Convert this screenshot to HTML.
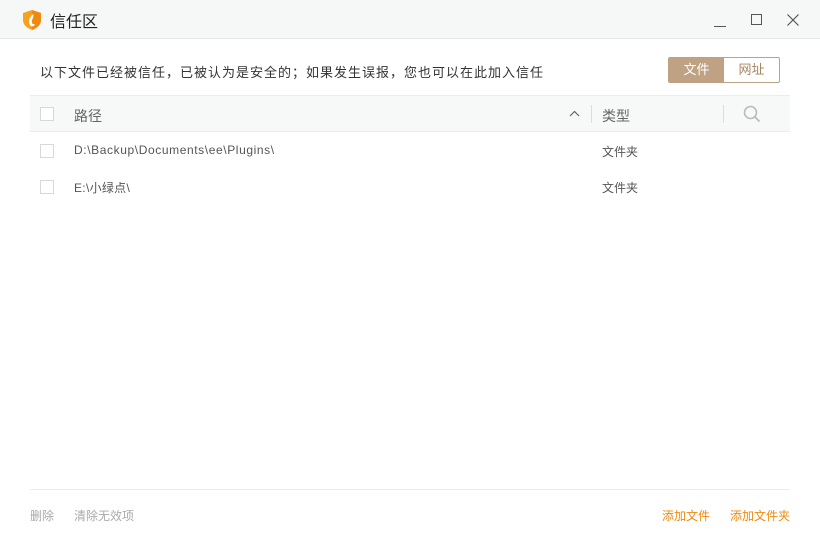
<!DOCTYPE html>
<html><head><meta charset="utf-8"><style>
*{margin:0;padding:0;box-sizing:border-box}
body{width:820px;height:540px;background:#fff;font-family:"Liberation Sans","Noto Sans CJK SC",sans-serif;position:relative;overflow:hidden;color:#333}
.t{position:absolute;white-space:nowrap}
.cb{position:absolute;width:14px;height:14px;border:1px solid #d8d8d8;background:#fff}
</style></head><body>
<div style="position:absolute;left:0;top:0;width:820px;height:39px;background:#f6f7f7;border-bottom:1px solid #e8e8e8"></div>
<svg style="position:absolute;left:22px;top:9px" width="20" height="22" viewBox="0 0 20 22"><path d="M10 1 L19 4 V11 C19 16 15 19 10 21 C5 19 1 16 1 11 V4 Z" fill="#f7a21b"/><path d="M10 1 L19 4 V11 C19 16 15 19 10 21 Z" fill="#f08a0f"/><path d="M11 5 C7 9 6 12 8 16 C9 18 12 18 13 15 C11 16 9 14 10 11 C11 9 12 7 11 5 Z" fill="#fff"/></svg>
<div class="t" style="left:50px;top:8px;font-size:16px;color:#222">信任区</div>
<div style="position:absolute;left:714px;top:26px;width:12px;height:1px;background:#555"></div>
<div style="position:absolute;left:751px;top:14px;width:11px;height:11px;border:1px solid #555"></div>
<svg style="position:absolute;left:787px;top:14px" width="12" height="12"><path d="M0.5 0.5L11.5 11.5M11.5 0.5L0.5 11.5" stroke="#555" stroke-width="1.2"/></svg>
<div class="t" style="left:40px;top:62px;font-size:13px;letter-spacing:1px;color:#333">以下文件已经被信任，已被认为是安全的；如果发生误报，您也可以在此加入信任</div>
<div style="position:absolute;left:668px;top:57px;width:112px;height:26px;border:1px solid #bfa283;border-radius:2px;overflow:hidden">
<div style="position:absolute;left:0;top:0;width:55px;height:24px;background:#bfa283;color:#fff;font-size:13px;text-align:center;line-height:24px">文件</div>
<div style="position:absolute;left:55px;top:0;width:55px;height:24px;color:#a88562;font-size:13px;text-align:center;line-height:24px">网址</div></div>
<div style="position:absolute;left:30px;top:95px;width:760px;height:37px;background:#f7f8f8;border-top:1px solid #ececec;border-bottom:1px solid #ececec"></div>
<div class="cb" style="left:40px;top:107px"></div>
<div class="t" style="left:74px;top:106px;font-size:14px;color:#666">路径</div>
<svg style="position:absolute;left:569px;top:110px" width="11" height="7"><path d="M1 6L5.5 1.5L10 6" stroke="#666" fill="none" stroke-width="1.2"/></svg>
<div style="position:absolute;left:591px;top:105px;width:1px;height:18px;background:#ddd"></div>
<div class="t" style="left:602px;top:106px;font-size:14px;color:#666">类型</div>
<div style="position:absolute;left:723px;top:105px;width:1px;height:18px;background:#ddd"></div>
<svg style="position:absolute;left:743px;top:105px" width="18" height="18"><circle cx="7.5" cy="7.5" r="6" stroke="#bbb" stroke-width="1.6" fill="none"/><path d="M12 12L16.5 16.5" stroke="#bbb" stroke-width="1.8"/></svg>
<div class="cb" style="left:40px;top:144px"></div>
<div class="t" style="left:74px;top:143px;font-size:12px;letter-spacing:0.6px;color:#555">D:\Backup\Documents\ee\Plugins\</div>
<div class="t" style="left:602px;top:143px;font-size:12px;color:#555">文件夹</div>
<div class="cb" style="left:40px;top:180px"></div>
<div class="t" style="left:74px;top:179px;font-size:12px;letter-spacing:0.3px;color:#555">E:\小绿点\</div>
<div class="t" style="left:602px;top:179px;font-size:12px;color:#555">文件夹</div>
<div style="position:absolute;left:30px;top:489px;width:760px;height:1px;background:#ececec"></div>
<div class="t" style="left:30px;top:507px;font-size:12px;color:#aaa">删除</div>
<div class="t" style="left:74px;top:507px;font-size:12px;color:#aaa">清除无效项</div>
<div class="t" style="left:662px;top:507px;font-size:12px;color:#f08a0f">添加文件</div>
<div class="t" style="left:730px;top:507px;font-size:12px;color:#f08a0f">添加文件夹</div>
</body></html>
